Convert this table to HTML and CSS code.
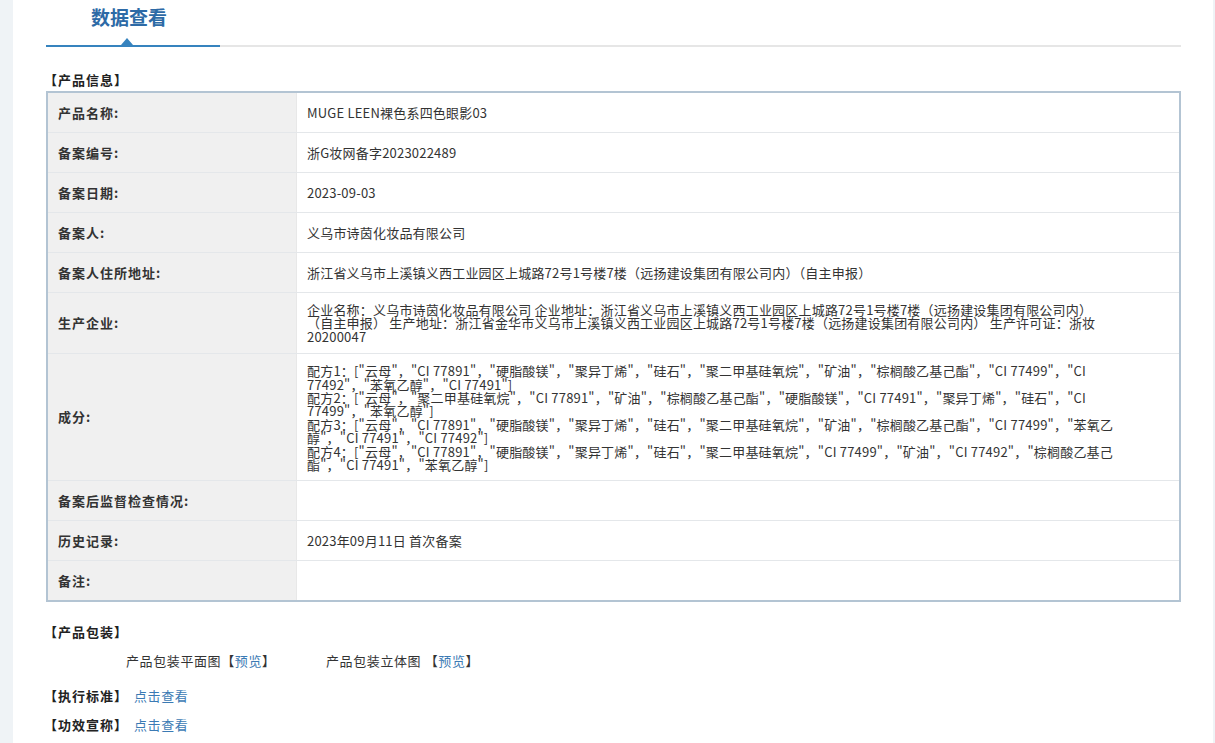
FILE: index.html
```html
<!DOCTYPE html>
<html lang="zh-CN">
<head>
<meta charset="utf-8">
<title>数据查看</title>
<link rel="stylesheet" href="styles.css">
</head>
<body>
<div class="page">
  <div class="header">
    <div class="tab">数据查看<span class="tri"></span></div>
  </div>

  <div class="sec-title first">【产品信息】</div>
  <table class="info">
    <tr><th>产品名称:</th><td>MUGE LEEN裸色系四色眼影03</td></tr>
    <tr><th>备案编号:</th><td>浙G妆网备字2023022489</td></tr>
    <tr><th>备案日期:</th><td>2023-09-03</td></tr>
    <tr><th>备案人:</th><td>义乌市诗茵化妆品有限公司</td></tr>
    <tr><th>备案人住所地址:</th><td>浙江省义乌市上溪镇义西工业园区上城路72号1号楼7楼（远扬建设集团有限公司内）（自主申报）</td></tr>
    <tr class="multi prod"><th>生产企业:</th><td><div class="lines">企业名称：义乌市诗茵化妆品有限公司 企业地址：浙江省义乌市上溪镇义西工业园区上城路72号1号楼7楼（远扬建设集团有限公司内）<br>（自主申报） 生产地址：浙江省金华市义乌市上溪镇义西工业园区上城路72号1号楼7楼（远扬建设集团有限公司内） 生产许可证：浙妆<br>20200047</div></td></tr>
    <tr class="multi"><th>成分:</th><td><div class="lines">配方1：["云母"，"CI 77891"，"硬脂酸镁"，"聚异丁烯"，"硅石"，"聚二甲基硅氧烷"，"矿油"，"棕榈酸乙基己酯"，"CI 77499"，"CI<br>77492"，"苯氧乙醇"，"CI 77491"]<br>配方2：["云母"，"聚二甲基硅氧烷"，"CI 77891"，"矿油"，"棕榈酸乙基己酯"，"硬脂酸镁"，"CI 77491"，"聚异丁烯"，"硅石"，"CI<br>77499"，"苯氧乙醇"]<br>配方3：["云母"，"CI 77891"，"硬脂酸镁"，"聚异丁烯"，"硅石"，"聚二甲基硅氧烷"，"矿油"，"棕榈酸乙基己酯"，"CI 77499"，"苯氧乙<br>醇"，"CI 77491"，"CI 77492"]<br>配方4：["云母"，"CI 77891"，"硬脂酸镁"，"聚异丁烯"，"硅石"，"聚二甲基硅氧烷"，"CI 77499"，"矿油"，"CI 77492"，"棕榈酸乙基己<br>酯"，"CI 77491"，"苯氧乙醇"]</div></td></tr>
    <tr><th>备案后监督检查情况:</th><td></td></tr>
    <tr><th>历史记录:</th><td>2023年09月11日 首次备案</td></tr>
    <tr><th>备注:</th><td></td></tr>
  </table>

  <div class="sec-title pack">【产品包装】</div>
  <div class="pack-row">
    <span class="pack-item">产品包装平面图【<a class="link">预览</a>】</span>
    <span class="pack-item">产品包装立体图 【<a class="link">预览</a>】</span>
  </div>
  <div class="sec-line"><span class="sec-title inline">【执行标准】</span><a class="link">点击查看</a></div>
  <div class="sec-line"><span class="sec-title inline">【功效宣称】</span><a class="link">点击查看</a></div>
</div>
</body>
</html>
```

FILE: styles.css
```css
html, body {
  margin: 0;
  padding: 0;
}
body {
  background: #eff3f6;
  font-family: "Noto Sans CJK SC", "Noto Sans", sans-serif;
  font-size: 13px;
  color: #333;
}
.page {
  margin-left: 13px;
  width: 1200px;
  min-height: 743px;
  background: #fff;
  padding: 0 32px 0 33px;
  box-sizing: border-box;
}
.header {
  height: 45px;
  border-bottom: 2px solid #e6e6e6;
  display: flex;
}
.tab {
  position: relative;
  width: 174px;
  box-sizing: border-box;
  padding-left: 45px;
  padding-top: 3px;
  font-size: 19px;
  font-weight: bold;
  color: #2d6aa6;
  line-height: 28px;
  border-bottom: 2px solid #3683be;
  margin-bottom: -2px;
}
.tri {
  position: absolute;
  left: 75px;
  bottom: 0;
  width: 0;
  height: 0;
  border-left: 6px solid transparent;
  border-right: 6px solid transparent;
  border-bottom: 7px solid #3683be;
}
.sec-title {
  font-weight: bold;
  color: #222;
  line-height: 18px;
  letter-spacing: 1px;
}
.sec-title.first {
  margin-top: 24px;
  margin-bottom: 2px;
  margin-left: -2px;
}
.info {
  width: 100%;
  border-collapse: collapse;
  border: 2px solid #b3c4d3;
}
.info th, .info td {
  border-bottom: 1px solid #e4e7ea;
  height: 39px;
  padding: 0 10px;
  text-align: left;
  vertical-align: middle;
  line-height: 18px;
}
.info tr:last-child th, .info tr:last-child td {
  border-bottom: none;
}
.info th {
  width: 228px;
  background: #f0f0f0;
  font-weight: bold;
  color: #333;
  letter-spacing: 1px;
  border-right: 1px solid #e8e8e8;
}
.info td {
  background: #fff;
  color: #333;
  letter-spacing: 0.2px;
}
.info tr.multi td {
  padding-top: 10px;
  padding-bottom: 9px;
}
.info tr.prod td {
  padding-top: 10px;
  padding-bottom: 10px;
}
.lines {
  line-height: 13.4px;
  white-space: nowrap;
}
.sec-title.pack {
  margin-top: 21px;
  margin-left: -2px;
}
.pack-row {
  margin-top: 11px;
  padding-left: 80px;
  display: flex;
  line-height: 18px;
  letter-spacing: 0.6px;
}
.pack-item:first-child {
  width: 200px;
}
.link {
  color: #3b7ab4;
  text-decoration: none;
}
.sec-line {
  margin-top: 17px;
  margin-left: -2px;
  line-height: 18px;
  display: flex;
  gap: 6px;
}
.sec-line .link {
  letter-spacing: 0.6px;
}
.sec-line + .sec-line {
  margin-top: 11px;
}
```
